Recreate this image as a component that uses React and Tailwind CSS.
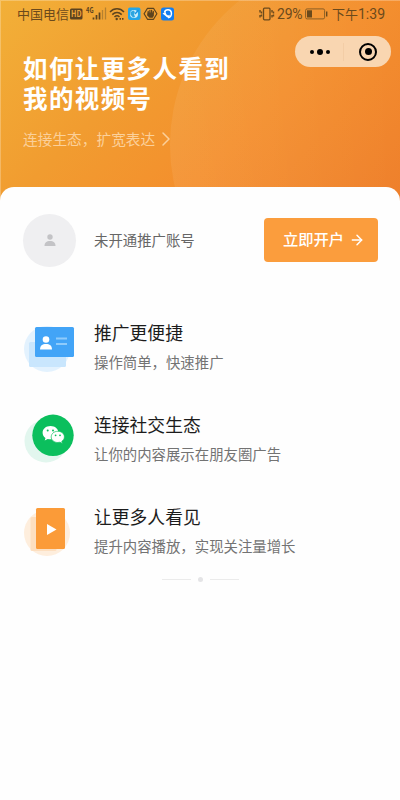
import { ChevronRight, ArrowRight } from 'lucide-react'

const AccountCardIcon = () => (
    <svg width="54" height="50" viewBox="0 0 54 50">
        <circle cx="25" cy="27" r="23" fill="#e3f2fe" />
        <rect x="7" y="20" width="37" height="25" rx="1.5" fill="#c9e6fd" />
        <rect x="13" y="5" width="39" height="30" rx="1.5" fill="#42a4f7" />
        <circle cx="24" cy="17.500" r="3.300" fill="#fff" />
        <path d="M18 27.500c0-3.600 2.300-5.400 6-5.400s6 1.800 6 5.400z" fill="#fff" />
        <path d="M34 16.500h11M34 22h11" stroke="#8fcbfb" strokeWidth="2.200" />
    </svg>
)

const WechatIcon = () => (
    <svg width="54" height="50" viewBox="0 0 54 50">
        <circle cx="24" cy="27" r="21.500" fill="#e2f6ee" />
        <circle cx="31" cy="21.300" r="20.700" fill="#0bbf5d" />
        <g transform="translate(0 -1.700)">
            <path d="M28.500 13.800c-4.600 0-7.900 2.900-7.900 6.600 0 2.100 1.100 3.900 2.900 5.200l-.8 2.500 3-1.500c.9.300 1.800.4 2.800.4 4.600 0 7.900-2.900 7.900-6.600s-3.300-6.600-7.900-6.600z" fill="#fff" />
            <path d="M35.800 19c-3.700 0-6.600 2.400-6.600 5.600s2.900 5.600 6.600 5.600c.8 0 1.500-.1 2.200-.3l2.400 1.300-.6-2.200c1.600-1.100 2.600-2.600 2.600-4.400 0-3.200-2.900-5.600-6.600-5.600z" fill="#fff" stroke="#0bbf5d" strokeWidth=".7" />
            <circle cx="25.700" cy="18.300" r="1" fill="#0bbf5d" />
            <circle cx="31" cy="18.300" r="1" fill="#0bbf5d" />
            <circle cx="33.600" cy="23" r=".9" fill="#0bbf5d" />
            <circle cx="38" cy="23" r=".9" fill="#0bbf5d" />
        </g>
    </svg>
)

const VideoIcon = () => (
    <svg width="54" height="50" viewBox="0 0 54 50">
        <circle cx="25" cy="27" r="23" fill="#feeedd" />
        <rect x="8.500" y="11" width="26" height="34" rx="1.500" fill="#fddfc0" />
        <rect x="14" y="2" width="29" height="41" rx="1.500" fill="#fb9b38" />
        <path d="M25 18v11l9.500-5.500z" fill="#fff" />
    </svg>
)

const features = [
    { icon: AccountCardIcon, title: '推广更便捷', text: '操作简单，快速推广' },
    { icon: WechatIcon, title: '连接社交生态', text: '让你的内容展示在朋友圈广告' },
    { icon: VideoIcon, title: '让更多人看见', text: '提升内容播放，实现关注量增长' },
]

const StatusIcons = () => (
    <svg width="106" height="16" viewBox="0 0 106 16">
        {/* HD badge */}
        <rect x="1" y="2.500" width="12.500" height="11" rx="1.500" fill="#5c431e" />
        <text x="2" y="11.200" fontSize="9" fontWeight="700" textLength="10.500" lengthAdjust="spacingAndGlyphs" fill="#efa63a">HD</text>
        {/* signal */}
        <text x="17" y="7" fontSize="7" fontWeight="700" textLength="7.500" lengthAdjust="spacingAndGlyphs" fill="#5c431e">4G</text>
        <path d="M24.500 11.500v2M27.500 9v4.500M30.500 6.500v7" stroke="#5c431e" strokeWidth="1.700" />
        <path d="M33.500 4v9.500M36.500 1.500v12" stroke="#b6812f" strokeWidth="1.300" />
        {/* wifi */}
        <g fill="none" stroke="#5c431e" strokeWidth="1.500">
            <path d="M41 6c4-4.200 10-4.200 14 0M43.300 8.600c2.800-2.800 6.600-2.800 9.400 0M45.500 11c1.600-1.500 3.500-1.500 5 0" />
        </g>
        <circle cx="47.700" cy="13" r="1.200" fill="#5c431e" />
        <path d="M50.500 12.800h1.500M53 12.800h1.500" stroke="#5c431e" strokeWidth="1.800" />
        {/* browser */}
        <rect x="59" y="1.500" width="12.500" height="12.500" rx="2" fill="#23a5e8" />
        <circle cx="65" cy="8" r="4" fill="#c9edfb" />
        <path d="M61.500 6l3-1.500 1.500 1.500-1 2 1 3-2 .5-2.500-3z" fill="#2da5df" />
        <path d="M66 8l3.500-4" stroke="#1593e2" strokeWidth="1.400" />
        {/* hand */}
        <path d="M78.500 2.300h6l3.400 5.500-3.400 5.500h-6l-3.400-5.500z" fill="none" stroke="#5c431e" strokeWidth="1.200" strokeLinejoin="round" />
        <path d="M79.200 7V5.300M80.900 7V4.300M82.600 7V4.300M84.300 7V5.300" stroke="#5c431e" strokeWidth="1.200" strokeLinecap="round" />
        <path d="M78.600 6.500h6.300v3l-1.200 2.200h-3.200l-2.500-2.500z" fill="#5c431e" />
        {/* assistant */}
        <rect x="92" y="1.500" width="13" height="13" rx="2.500" fill="#147ef0" />
        <path d="M95.500 6.500c.8-3.500 6-3.500 6.800-.3.700 2.900-.7 5-3.200 5.600" fill="none" stroke="#fff" strokeWidth="1.500" />
        <path d="M93.500 7.500l3-1.500.8 2.200 1.700 1.300 1.800-.8-.5 2.200-2 .6-2.300-2z" fill="#fff" />
    </svg>
)

const StatusBar = () => (
    <div className="flex h-7 items-center justify-between pl-[17px] pr-[15px] text-[13px] text-[#6b4a1c]">
        <div className="flex items-center">
            <span className="-mt-[2px] w-[52px] leading-none">中国电信</span>
            <StatusIcons />
        </div>
        <div className="flex items-center font-[Roboto,'Noto_Sans_CJK_SC',sans-serif] leading-none">
            <svg width="17" height="14" viewBox="0 0 17 14" fill="none" stroke="#6b4a1c">
                <rect x="5.500" y="1.200" width="6.500" height="11.600" rx="1" strokeWidth="1.300" />
                <path d="M2 3v2.500M2 8v2.500M3.500 4.500v2M3.500 7.500v2M14 3v2.500M14 8v2.500M15.500 4.500v2M15.500 7.500v2" strokeWidth="1.400" />
            </svg>
            <span className="ml-[2px] w-[26px] text-[14px] tracking-[-0.2px]">29%</span>
            <svg width="23" height="12" viewBox="0 0 23 12" className="ml-[2px]">
                <rect x=".6" y=".9" width="19" height="10" rx="1.500" fill="none" stroke="#8a5f25" strokeWidth="1" />
                <rect x="2" y="2.300" width="5" height="7.200" fill="#6b4a1c" />
                <path d="M21.700 3.500v5" stroke="#6b4a1c" strokeWidth="1.400" />
            </svg>
            <span className="ml-[4px] whitespace-nowrap text-[13px]">下午<span className="text-[14px]">1:39</span></span>
        </div>
    </div>
)

const Capsule = () => (
    <div className="absolute right-[9px] top-[36px] flex h-[31px] w-[96px] items-center rounded-full bg-[#f9d6b1]">
        <div className="flex flex-1 items-center justify-center gap-[3px] pl-[2px]">
            <i className="size-[4px] rounded-full bg-black" />
            <i className="size-[6px] rounded-full bg-black" />
            <i className="size-[4px] rounded-full bg-black" />
        </div>
        <div className="h-[18px] w-px bg-[#f3cda6]" />
        <div className="flex flex-1 justify-center pl-[2px]">
            <div className="flex size-[18px] items-center justify-center rounded-full border-[2.5px] border-black">
                <i className="size-[7px] rounded-full bg-black" />
            </div>
        </div>
    </div>
)

function App() {
    return (
        <div className="h-[800px] w-[400px] overflow-hidden bg-[#fefefe] font-['Noto_Sans_CJK_SC',sans-serif]">
            <header className="relative h-[207px] overflow-hidden bg-[linear-gradient(135deg,#f2b038_0%,#f19c30_35%,#f48f2d_62%,#ee7e2a_100%)]">
                <div className="absolute left-[170px] top-[-40px] size-[370px] rounded-full bg-linear-to-r from-white/7 to-white/0 to-70%" />
                <div className="absolute inset-0 border-l border-t border-white/25" />
                <div className="relative">
                    <StatusBar />
                    <h1 className="ml-[23px] mt-[25px] text-[24.500px] font-bold leading-[30px] tracking-[1.400px] text-white">
                        <span className="block">如何让更多人看到</span>
                        <span className="block">我的视频号</span>
                    </h1>
                    <p className="ml-[23px] mt-[15px] flex items-center text-[14.700px] leading-[22px] text-[#fbd09a]">
                        连接生态，扩宽表达
                        <ChevronRight size={24} strokeWidth={1.5} className="-my-px ml-[-1px]" />
                    </p>
                </div>
                <Capsule />
            </header>

            <main className="relative -mt-5 rounded-t-[14px] bg-[#fefefe]">
                <section className="flex h-[106px] items-center pl-[23px] pr-[22px]">
                    <div className="flex size-[53px] items-center justify-center rounded-full bg-[#efeff1]">
                        <svg width="12" height="12" viewBox="0 0 12 12" fill="#c3c3c6">
                            <circle cx="6" cy="3" r="2.700" />
                            <path d="M.5 12c0-3.500 2-5 5.500-5s5.500 1.500 5.500 5z" />
                        </svg>
                    </div>
                    <span className="ml-[18px] text-[14.400px] text-[#666]">未开通推广账号</span>
                    <button className="ml-auto flex h-[44px] w-[114px] items-center justify-center gap-[5px] rounded-[4px] bg-[#fb9d3d] pb-[4px] pl-[6px] text-[15.300px] font-medium text-white">
                        立即开户
                        <ArrowRight size={16} strokeWidth={2.2} className="mt-[4px]" />
                    </button>
                </section>

                <section className="pt-[29px]">
                    {features.map(({ icon: Icon, title, text }) => (
                        <div key={title} className="flex h-[92px] pl-[22px]">
                            <Icon />
                            <div className="-mt-[2px] ml-[18px]">
                                <h2 className="text-[17.800px] leading-[24px] text-[#1c1c1c]">{title}</h2>
                                <p className="mt-[8px] text-[14.400px] leading-[20px] text-[#737373]">{text}</p>
                            </div>
                        </div>
                    ))}
                </section>

                <div className="-mt-[21px] flex items-center justify-center gap-[7px]">
                    <i className="h-px w-[29px] bg-[#ebebeb]" />
                    <i className="size-[5px] rounded-full bg-[#e4e4e6]" />
                    <i className="h-px w-[29px] bg-[#ebebeb]" />
                </div>
            </main>
        </div>
    )
}

export default App
